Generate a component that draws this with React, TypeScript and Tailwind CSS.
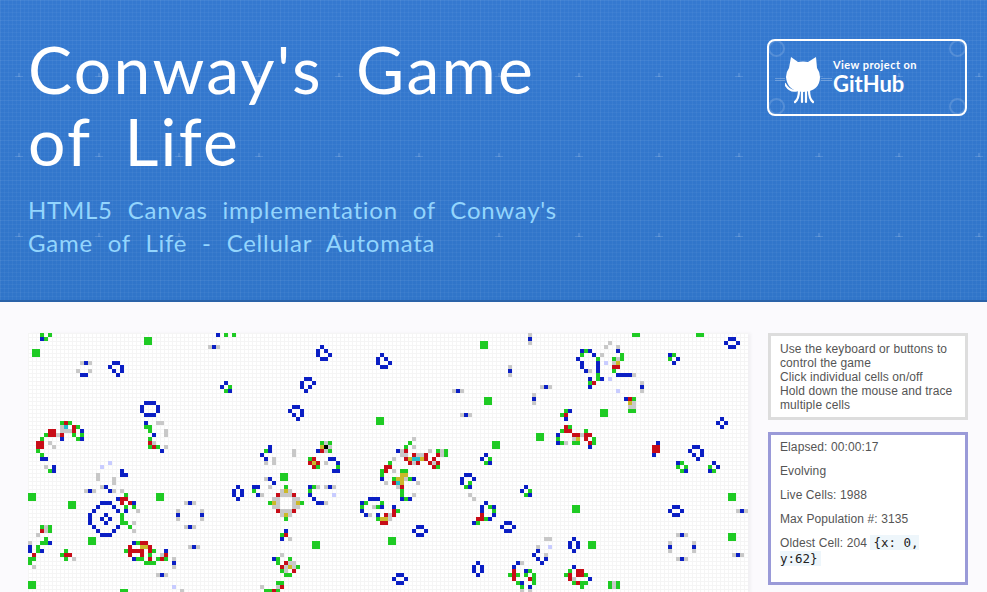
const CELL_ROWS = [
  "g3 g5 b47 g49 g51 s125 g151 g152 g167 g168",
  "b3 g4 g29 g30 b125 b175 b176",
  "g29 g30 g113 g114 s125 s145 b174 b177",
  "s45 b46 s47 b73 g113 g114 s144 s147 b175 b176",
  "g1 g2 b72 b74 b138 g139 b140 b147",
  "g1 g2 b72 b75 b88 g138 b141 s143 g148 b160 g161",
  "b73 b74 b87 b89 b137 g142 g146 s147 g148 g160 b162",
  "s13 b14 s15 b21 b22 b87 b90 b138 b142 k144 s146 y147 b161",
  "b20 b23 b88 b89 s120 b138 b142 r146 r147",
  "s12 s15 b21 b23 b120 b139 s140 b142 g146",
  "b13 b14 b22 s120 g142 b147 b148 b149 b150 s151",
  "b69 b70 b140 g142 b143 k145",
  "b49 b68 b71 g140 r141 s153",
  "b48 g50 b68 b70 s128 b129 s130 b140 b153",
  "g49 b50 b69 s106 b107 s108 k147 s153",
  "s126",
  "g114 g115 b126 b149 r150 g151",
  "b29 b30 b31 g114 g115 s126 y150 s151",
  "b28 b32 b66 b67 s150 s151",
  "b28 b32 b65 b68 g134 b135 g150 g151 g143 g144",
  "b29 b30 b31 b66 b68 s108 b109 s110 g133 r134 g143 g144",
  "b67 g87 g88 b134 b173",
  "g8 r9 g10 b29 s32 s33 g87 g88 b172 b174",
  "s8 c9 r11 g12 g29 g30 r134 g135 b173",
  "r5 r6 s8 s9 s10 r11 b13 g30 s34 g133 r134 r135 g139",
  "g4 r5 r6 s7 r8 g11 g13 b31 s34 g127 g128 b132 r136 r137 s138 r139 r140",
  "g3 b8 g12 b13 g30 s96 g127 g128 g132 s136 y137 r139 g141",
  "r2 r3 s5 r30 s31 g73 s74 g75 g95 g116 g117 b132 g133 s134 g136 g137 r140 g141 b157",
  "r2 r3 s6 g30 r31 g32 s34 b60 y73 n74 s75 g94 s96 g116 g117 b140 r156 r157 b166 b167",
  "g2 b33 g59 b60 s66 b72 r73 s74 g75 b92 s93 r94 s100 g102 s103 g104 r156 r157 b165 b168",
  "g3 b58 s66 s93 s94 r96 s97 s98 r99 r102 s103 g104 b114 b156 b166 b168",
  "b3 b4 b59 s61 g70 r71 b75 b76 s91 r94 y95 c96 c97 y98 r99 r101 b113 g115 b167",
  "k20 s59 s61 r70 y71 r72 s74 b77 g90 r95 s96 r97 r100 s101 r102 g114 b115 b162 g163 b171",
  "s4 b6 k18 r71 g72 g77 r89 r90 r101 g102 g162 g164 g170 b172",
  "g5 b6 b23 b76 b77 g88 r89 s91 g93 g94 g163 b164 b170 g171",
  "s17 b23 b24 g63 g64 g88 y93 y94 b109 b110",
  "s17 s21 g63 g64 s59 b60 b88 g91 y92 y93 s94 g95 b96 b108 b111",
  "s21 b61 s89 r91 c92 y93 s97 b108 g110",
  "s18 b19 b52 b56 b57 s60 g64 b70 g71 s72 s74 b75 s76 s92 r93 g109 b110 b124",
  "s14 b15 s16 b20 s21 s23 b51 b53 g56 s63 y64 s65 g70 g93 b123 g125",
  "g0 g1 g24 g32 g33 b51 b53 b57 s58 r62 s63 s64 s65 r66 b70 k76 g93 s96 s110 g124 b125 g175 g176",
  "g0 g1 b22 r23 r24 g32 g33 b52 s61 s62 s66 s67 b71 b85 b86 b87 b93 g94 b95 s111 g175 g176",
  "g10 g11 b18 b19 b20 r23 r25 b26 s39 b40 s41 g60 y61 s62 s66 y67 g68 b72 b73 s74 b83 g84 g88 b114",
  "g10 g11 b17 b21 g24 g26 s61 s62 s66 s67 g83 s86 g87 b88 b91 b113 g115 b116 g136 g137 b161 b162",
  "b16 b22 b24 s27 s37 s43 r62 s63 s64 s65 r66 b83 r91 g92 b113 g116 g136 g137 b160 b163 s177 b178 s179",
  "b15 b19 g23 b37 b43 s63 y64 s65 b84 s85 b87 r89 s90 r91 r113 b116 b161 b162",
  "b15 b18 b20 g23 s37 s43 g64 g87 y88 y89 s90 r112 r113 g114 b115",
  "b15 b19 g23 g24 s26 r88 r89 b111 g112 b119 b120",
  "g3 s4 g5 b16 b22 g25 s39 b40 s41 b97 b98 b118 b121",
  "r3 s4 g5 b17 b21 s26 b64 b96 b99 b119 b120",
  "s2 b18 b19 b20 g63 r64 b97 b98 s162 b163 s164 g175 g176",
  "g4 g15 g16 b63 s65 g90 g91 s129 s130 b136 g175 g176",
  "s0 g3 g4 b5 g15 g16 b26 g27 r28 r29 g71 g72 g90 g91 b135 b137 g140 g141 s160 s166",
  "b0 g2 r25 y28 y29 r30 s40 b41 s42 g71 g72 s127 k130 b135 b137 g140 g141 b160 b166",
  "b0 g2 b3 g9 g24 r25 r26 r27 r28 r30 g31 b34 b127 b136 s160 s166",
  "r1 g8 r9 r10 r25 r28 g30 s33 r34 s63 b126 s129 s176 b177 s178",
  "g0 g1 g9 s11 b26 g27 g28 r30 g32 r33 g34 s36 b61 g62 g65 b127 b129 s162 b163 s164",
  "g0 g29 g30 g31 b36 g62 r64 s65 s66 b112 b122 s123 b128",
  "s1 s36 r63 s64 y65 s66 g67 b111 b113 b121 b136",
  "g63 s64 r66 b111 b113 r121 b124 g125 g135 r137 r138",
  "s32 b33 s34 g64 g65 b92 b93 b112 g120 r121 g122 g124 g126 g134 r135 r137 r138 g139",
  "b91 b94 r121 r125 g126 r135 s136 b140",
  "g0 g1 g62 g63 b92 b93 g122 b123 g126 g136 r137 g138 g139 g145 s146 g147",
  "g0 g1 k36 s58 s62 r63 g123 b125 g138 g145 s146 g147",
  "g23 g24 s38 g59 g60 r61 g62 s123 s125",
];

const COLORS: Record<string, string> = {
  b: "#0b1fc4",
  g: "#1fcb24",
  r: "#c80d18",
  s: "#c8c8c8",
  k: "#c8ccff",
  y: "#cbb92a",
  c: "#25bccb",
  n: "#000000",
};

function LifeGrid() {
  return (
    <svg width="720" height="260" viewBox="0 0 720 260" shapeRendering="crispEdges" className="block">
      {CELL_ROWS.flatMap((row, y) =>
        row.split(" ").map((cell) => (
          <rect
            key={`${y}-${cell}`}
            x={Number(cell.slice(1)) * 4}
            y={y * 4}
            width="4"
            height="4"
            fill={COLORS[cell[0]]}
          />
        )),
      )}
    </svg>
  );
}

function Octocat() {
  return (
    <svg width="37" height="47" viewBox="0 0 37 47" fill="none" className="shrink-0">
      <path
        d="M6 0 L13 5 Q18 4 23 5 L31 0 L32 11 Q35 15 35 20 Q35 34 18 35 Q2 34 1 20 Q1 15 4 11 Z"
        fill="#fff"
      />
      <g stroke="#fff" strokeWidth="2.2" strokeLinecap="round">
        <path d="M0 27 Q5 36 13 33" />
        <path d="M14 33 Q14 42 10 45" />
        <path d="M17 33 V45" />
        <path d="M21 33 V45" />
        <path d="M24 33 Q24 42 28 45" />
      </g>
    </svg>
  );
}

function GithubButton() {
  return (
    <a className="relative mt-[39px] mr-[20px] flex h-[77px] w-[200px] shrink-0 items-start rounded-[8px] border-2 border-white pt-[16px] pl-[16px] text-white">
      {/* ring marks and whiskers sitting on the blueprint behind the button */}
      <span className="absolute top-[-1px] left-[-1px] h-[17px] w-[17px] rounded-full border-2 border-white/15" />
      <span className="absolute top-[-1px] right-[-1px] h-[17px] w-[17px] rounded-full border-2 border-white/15" />
      <span className="absolute bottom-[-1px] left-[-1px] h-[17px] w-[17px] rounded-full border-2 border-white/15" />
      <span className="absolute right-[-1px] bottom-[-1px] h-[17px] w-[17px] rounded-full border-2 border-white/15" />
      <span className="absolute top-[37px] left-[6px] h-[3px] w-[10px] border-y border-white/25" />
      <span className="absolute top-[37px] left-[52px] h-[3px] w-[11px] border-y border-white/25" />
      <Octocat />
      <div className="ml-[11px] font-['Lato',sans-serif]">
        <div className="mt-[1px] text-[11px] leading-[14px] font-bold tracking-[0.45px]">View project on</div>
        <div className="text-[22px] leading-[24px] font-bold">GitHub</div>
      </div>
    </a>
  );
}

export default function App() {
  return (
    <div className="h-[592px] overflow-hidden bg-[#fbfafd] font-['Liberation_Sans',sans-serif]">
      <header className="relative h-[302px] border-b-2 border-[#2a62a8] bg-[linear-gradient(rgba(255,255,255,0.025)_1px,transparent_1px),linear-gradient(90deg,rgba(255,255,255,0.025)_1px,transparent_1px),linear-gradient(rgba(255,255,255,0.035)_1px,transparent_1px),linear-gradient(90deg,rgba(255,255,255,0.035)_1px,transparent_1px),linear-gradient(#3579d0,#3075c9)] bg-[size:20px_20px,20px_20px,4px_4px,4px_4px,100%_100%]">
        <svg className="absolute inset-0" width="987" height="300">
          <defs>
            <pattern id="marks" x="-61" y="-3" width="80" height="80" patternUnits="userSpaceOnUse">
              <path d="M80 76 V84 M76 80 H84 M0 76 V84 M-4 80 H4" stroke="#fff" strokeOpacity="0.25" />
            </pattern>
          </defs>
          <rect width="987" height="300" fill="url(#marks)" />
        </svg>
        <div className="relative flex justify-between pl-[28px]">
          <div className="w-[560px] pt-[33px] font-['Lato',sans-serif]">
            <h1 className="text-[66px] leading-[72px] font-normal tracking-[2.3px] text-white [word-spacing:14px]">
              Conway's Game of Life
            </h1>
            <h2 className="mt-[16px] w-[535px] text-[24px] leading-[33px] font-normal tracking-[0.75px] text-[#93d5fd] [word-spacing:8px]">
              HTML5 Canvas implementation of Conway's Game of Life - Cellular Automata
            </h2>
          </div>
          <GithubButton />
        </div>
      </header>
      <main className="flex pt-[31px] pl-[28px]">
        <div className="h-[260px] w-[720px] shrink-0 bg-white bg-[linear-gradient(#f5f5f5_1px,transparent_1px),linear-gradient(90deg,#f5f5f5_1px,transparent_1px)] bg-[size:4px_4px] shadow-[3px_0_3px_rgba(0,0,0,0.04)]">
          <LifeGrid />
        </div>
        <aside className="ml-[20px] w-[200px] shrink-0 text-[12px] leading-[14px] tracking-[0.1px] text-[#555]">
          <div className="border-[3px] border-[#ddd] bg-white px-[9px] pt-[6px] pb-[5px]">
            Use the keyboard or buttons to control the game
            <br />
            Click individual cells on/off
            <br />
            Hold down the mouse and trace multiple cells
          </div>
          <div className="mt-[12px] h-[153px] border-[3px] border-[#9a9ad8] bg-white px-[9px] pt-[5px]">
            <p>Elapsed: 00:00:17</p>
            <p className="mt-[10px]">Evolving</p>
            <p className="mt-[10px]">Live Cells: 1988</p>
            <p className="mt-[10px]">Max Population #: 3135</p>
            <p className="mt-[9px] leading-[15px]">
              Oldest Cell: 204{" "}
              <code className="bg-[#eef6fb] px-[3px] font-['DejaVu_Sans_Mono',monospace] text-[12.5px] tracking-normal text-[#222]">
                {"{x: 0, y:62}"}
              </code>
            </p>
          </div>
        </aside>
      </main>
    </div>
  );
}
